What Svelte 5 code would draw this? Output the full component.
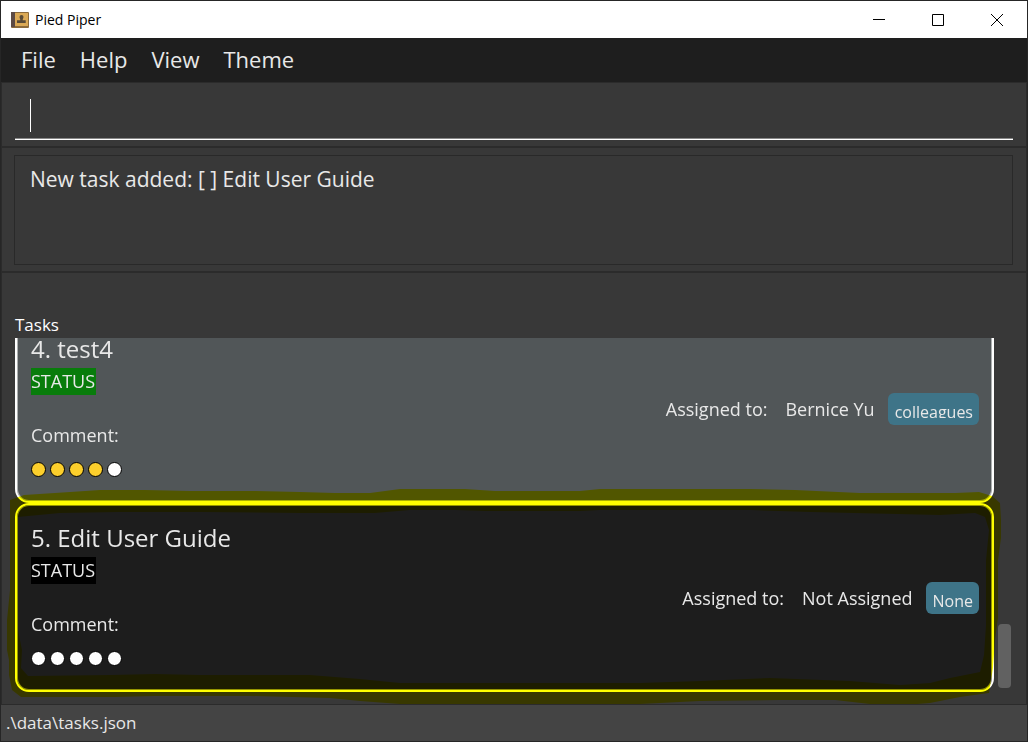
<script>
  const menus = ['File', 'Help', 'View', 'Theme'];
  const tasks = [
    { id: 4, name: 'test4', done: true, person: 'Bernice Yu', tag: 'colleagues', score: 4 },
    { id: 5, name: 'Edit User Guide', done: false, person: 'Not Assigned', tag: 'None', score: 0 }
  ];
  let command = $state('');
</script>

<div class="window">
  <header class="title-bar">
    <svg class="app-icon" width="18" height="17" viewBox="0 0 18 17" aria-hidden="true">
      <rect y="1" width="18" height="16" rx="1" fill="#8c6a3a" />
      <rect y="1" width="4" height="15" fill="#5c4a44" />
      <rect x="4" y="2" width="13" height="13" fill="#dba955" />
      <path d="M10.500 4a2 2 0 0 1 2 2c0 1.200-.8 1.800-.8 3.300h3V12H6V9.300h3.300c0-1.500-.8-2.100-.8-3.300a2 2 0 0 1 2-2z" fill="#594a36" />
    </svg>
    <h1>Pied Piper</h1>
    <div class="controls">
      <button aria-label="Minimize"><svg width="12" height="12" viewBox="0 0 12 12"><path d="M0 5.500h12" /></svg></button>
      <button aria-label="Maximize"><svg width="12" height="12" viewBox="0 0 12 12"><path d="M.5.500h11v11H.5z" /></svg></button>
      <button aria-label="Close"><svg width="12" height="12" viewBox="0 0 12 12"><path d="M0 0l12 12M12 0L0 12" /></svg></button>
    </div>
  </header>

  <nav>
    {#each menus as menu}<button>{menu}</button>{/each}
  </nav>

  <div class="command">
    <div class="field">
      <input aria-label="Command" bind:value={command} />
      <span class="caret"></span>
    </div>
  </div>

  <section class="result">
    <output>New task added: [ ] Edit User Guide</output>
  </section>

  <main>
    <h2>Tasks</h2>
    <div class="viewport">
      <ul>
        {#each tasks as task, i}
          <li class:alt={i % 2 === 0}>
            <div class="details">
              <h3>{task.id}. {task.name}</h3>
              <span class="status" class:done={task.done}>STATUS</span>
              <p>Comment:</p>
              <div class="dots">
                {#each [1, 2, 3, 4, 5] as n}<i class:on={n <= task.score}></i>{/each}
              </div>
            </div>
            <div class="assigned">
              <span>Assigned to:</span>
              <span>{task.person}</span>
              <span class="tag"><span>{task.tag}</span></span>
            </div>
            {#if i === tasks.length - 1}
              <svg class="marker" viewBox="0 485 1028 225" preserveAspectRatio="none" aria-hidden="true">
                <path
                  fill="#ff0"
                  fill-rule="evenodd"
                  d="M10 500L24 495 70 492 100 490H145L190 491H256L300 492 335 493H370L400 489H465L495 491H580L600 489H750L795 490 860 493H955L979 492 992 496 1000 503 1001 520V538L998 560V618L995 640 993 668 989 693 960 697 930 703 905 705 870 704 835 700H780L700 701 640 704H400L360 701 330 698 250 696H155L115 697H21L12 690 9 675V660L7 650V620L10 590Z
                     M18 517L60 513 120 512H200L300 513H375L410 510H455L485 511H580L600 510H750L810 512 940 515 975 513 985 517 989 530 986 560 986 625 984 655 980 672 950 678 930 683 900 685 850 681 770 678 700 681 640 683H400L360 679 310 675 200 675 155 674 110 675 28 676 21 668 22 650 18 630Z"
                />
              </svg>
            {/if}
          </li>
        {/each}
      </ul>
      <div class="scroll"><div class="thumb"></div></div>
    </div>
  </main>

  <footer>.\data\tasks.json</footer>
</div>

<style>
  :global(body) { margin: 0; background: #262626; }
  * { box-sizing: border-box; }
  .window {
    display: flex; flex-direction: column; min-height: 100vh; overflow: hidden;
    border: 1px solid #262626; background: #383838; color: #e8e8e8;
    font-family: "Segoe UI", "Open Sans", "Noto Sans", sans-serif; font-size: 18px;
  }
  h1, h2, h3, p, ul { margin: 0; padding: 0; font-weight: 400; }
  button { border: 0; padding: 0; background: none; color: inherit; font: inherit; }
  .title-bar { display: flex; align-items: center; height: 37px; padding-left: 10px; background: #fff; color: #000; }
  h1 { margin-left: 6px; font-size: 14px; }
  .controls { display: flex; margin-left: auto; padding-right: 1px; }
  .controls button { display: grid; place-items: center; width: 59px; height: 36px; }
  .controls path { fill: none; stroke: #000; }
  nav { display: flex; gap: 24px; height: 44px; padding: 0 20px 2px; align-items: center; background: #1e1e1e; font-size: 22px; }
  .command { height: 66px; padding: 12px 13px 8px; border: solid #2b2b2b; border-width: 1px 1px 2px; }
  .field { position: relative; }
  input { display: block; width: 100%; height: 45px; padding: 0 15px; border: 0; border-bottom: 1px solid #fff; box-shadow: inset 0 -1px #888; background: none; color: #fff; font: inherit; outline: 0; }
  .caret { position: absolute; left: 15px; top: 4px; width: 1px; height: 33px; background: #fff; }
  .result { padding: 7px 13px 6px 12px; border: solid #2b2b2b; border-width: 0 1px 2px; }
  output { display: block; height: 110px; padding: 8px 15px; border: 1px solid #292929; font-size: 21px; line-height: 30px; }
  main { display: flex; flex-direction: column; flex: 1; padding: 40px 13px 0; border: solid #2b2b2b; border-width: 0 1px; }
  h2 { height: 25px; font-size: 17px; line-height: 23px; color: #fff; }
  .viewport { display: flex; height: 366px; overflow: hidden; margin: 0 -13px; padding: 0 14px 12px 13px; align-items: flex-end; background: #383838; isolation: isolate; }
  ul { flex: 1; list-style: none; }
  li {
    position: relative; display: flex; align-items: center; height: 189px; padding: 15px 13px 15px 14px;
    border: 2px solid #fff; border-radius: 14px; background: #1d1d1d; box-shadow: inset 0 0 0 1px #fff8;
  }
  li.alt { background: #515658; }
  .details { flex: 1; align-self: flex-start; }
  h3 { font-size: 24px; line-height: 36px; }
  .status { display: block; width: fit-content; margin-top: 1px; padding-right: 1px; background: #000; line-height: 27px; }
  .status.done { background: #087c0b; }
  p { margin-top: 26px; line-height: 28px; }
  .dots { display: flex; gap: 4px; margin-top: 13px; }
  .dots i { width: 15px; height: 15px; border: 1px solid #000; border-radius: 50%; background: #fff; }
  .dots i.on { background: #fccf2c; }
  .assigned { display: flex; align-items: center; line-height: 32px; }
  .assigned > span + span { margin-left: 18px; }
  .assigned > .tag { height: 32px; margin-left: 13px; padding: 7px 6px 0 7px; border-radius: 6px; background: #3e7488; font-size: 16px; line-height: 24px; }
  .tag span { display: block; height: 18px; overflow: hidden; }
  .marker { position: absolute; left: -17px; top: -20px; width: calc(100% + 53px); height: 225px; mix-blend-mode: multiply; pointer-events: none; }
  .scroll { width: 18px; height: 68px; padding-left: 4px; }
  .thumb { width: 13px; height: 64px; border-radius: 4px; background: #616161; }
  footer { height: 37px; padding: 0 5px; border-top: 1px solid #2b2b2b; background: #444; font-size: 17px; line-height: 36px; }
</style>
